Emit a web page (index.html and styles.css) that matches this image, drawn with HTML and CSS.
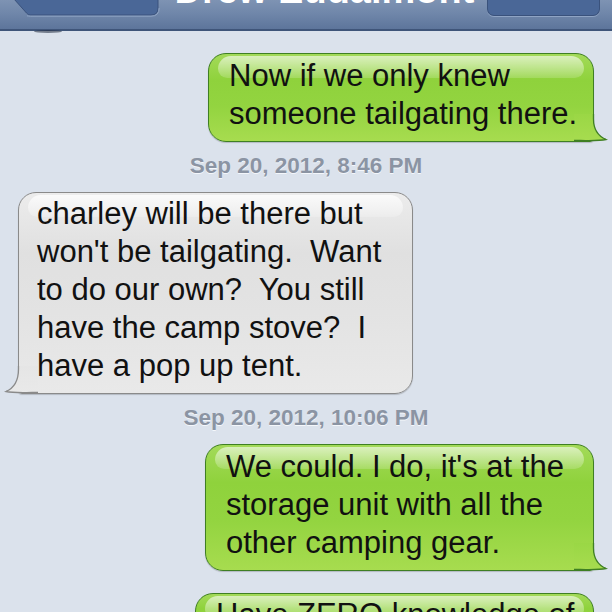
FILE: index.html
```html
<!DOCTYPE html>
<html>
<head>
<meta charset="utf-8">
<link rel="stylesheet" href="styles.css">
</head>
<body>
<svg class="defs" width="0" height="0">
  <defs>
    <linearGradient id="gTail" x1="0" y1="0" x2="0" y2="1">
      <stop offset="0" stop-color="#9ad745"/>
      <stop offset="1" stop-color="#a7dc4f"/>
    </linearGradient>
    <linearGradient id="wTail" x1="0" y1="0" x2="0" y2="1">
      <stop offset="0" stop-color="#e5e5e5"/>
      <stop offset="1" stop-color="#e9e9e9"/>
    </linearGradient>
  </defs>
</svg>
<header class="nav">
  <svg class="back" width="150" height="17" viewBox="0 0 150 17">
    <path d="M2 -1 L14.5 13 Q16 15 18.5 15 L139 15 Q146 15 146 8 L146 -1 Z" fill="#4a6797" stroke="#3a527c" stroke-width="1"/>
    <path d="M15 15.8 Q16.5 16.2 18.5 16.2 L139 16.2 Q147.2 16.2 147.2 8" fill="none" stroke="#8fa4c4" stroke-width="1"/>
  </svg>
  <h1 class="title">Drew Eudaimont</h1>
  <div class="btn-right"></div>
</header>
<div class="shadow-blob"></div>
<main class="thread">
  <div class="bubble out b1">
    <span class="txt">Now if we only knew<br>someone tailgating there.</span>
    <svg class="tail tail-out" width="34" height="28" viewBox="0 0 34 28"><path d="M0 0 H19.5 V5 C19.5 16 24 22 32 25.5 C25 27 15 26.5 6 26.5 H0 Z" fill="url(#gTail)"/><path d="M19.5 0 V5 C19.5 16 24 22 32 25.5 C25 27 15 26.5 6 26.5 H0" fill="none" stroke="#3f7f23" stroke-width="1.3"/></svg>
  </div>
  <p class="stamp">Sep 20, 2012, 8:46 PM</p>
  <div class="bubble in b2">
    <span class="txt">charley will be there but<br>won't be tailgating.&nbsp; Want<br>to do our own?&nbsp; You still<br>have the camp stove?&nbsp; I<br>have a pop up tent.</span>
    <svg class="tail tail-in" width="34" height="28" viewBox="0 0 34 28"><path d="M0 0 H19.5 V3 C19.5 15 24 22 32 25.5 C25 27 15 26.5 6 26.5 H0 Z" fill="url(#wTail)"/><path d="M19.5 0 V3 C19.5 15 24 22 32 25.5 C25 27 15 26.5 6 26.5 H0" fill="none" stroke="#8a8a8a" stroke-width="1.3"/></svg>
  </div>
  <p class="stamp">Sep 20, 2012, 10:06 PM</p>
  <div class="bubble out b3">
    <span class="txt">We could. I do, it's at the<br>storage unit with all the<br>other camping gear.</span>
    <svg class="tail tail-out" width="34" height="28" viewBox="0 0 34 28"><path d="M0 0 H19.5 V5 C19.5 16 24 22 32 25.5 C25 27 15 26.5 6 26.5 H0 Z" fill="url(#gTail)"/><path d="M19.5 0 V5 C19.5 16 24 22 32 25.5 C25 27 15 26.5 6 26.5 H0" fill="none" stroke="#3f7f23" stroke-width="1.3"/></svg>
  </div>
  <div class="bubble out b4">
    <span class="txt">Have ZERO knowledge of</span>
  </div>
</main>
</body>
</html>
```
FILE: styles.css
```css
html, body {
  margin: 0;
  padding: 0;
}
body {
  background: #dbe2ec;
  font-family: "Liberation Sans", Arial, Helvetica, sans-serif;
  height: 612px;
  overflow: hidden;
  position: relative;
}
.defs {
  position: absolute;
  width: 0;
  height: 0;
}
.nav {
  height: 29px;
  display: flex;
  align-items: flex-start;
  overflow: hidden;
  background: linear-gradient(#7e93b3 0%, #7087aa 45%, #5d759b 100%);
  border-bottom: 2px solid #3f5579;
  padding: 0 12px 0 12px;
}
.back {
  display: block;
  flex: none;
}
.title {
  flex: 1;
  margin: -29px 0 0 0;
  font-size: 38px;
  line-height: 38px;
  font-weight: bold;
  color: #fff;
  text-align: center;
  text-shadow: 0 -1px 0 #3b5076;
  white-space: nowrap;
}
.btn-right {
  flex: none;
  width: 111px;
  height: 15px;
  background: #4a6797;
  border: 1px solid #3a527c;
  border-top: none;
  border-radius: 0 0 7px 7px;
  box-shadow: 0 1px 0 #8fa4c4;
}
.shadow-blob {
  position: absolute;
  left: 34px;
  top: 30px;
  width: 28px;
  height: 3px;
  border-radius: 50%;
  background: rgba(30, 40, 60, 0.55);
  filter: blur(0.6px);
}
.thread {
  display: flex;
  flex-direction: column;
  padding: 22px 18px 0 18px;
}
.bubble {
  position: relative;
  box-sizing: border-box;
  font-size: 31px;
  line-height: 38px;
  color: #111;
  white-space: nowrap;
  padding: 2.5px 0 8px 0;
  border-radius: 18px;
  box-shadow: 0 1px 1px rgba(0, 0, 0, 0.18);
}
.bubble::before {
  content: "";
  position: absolute;
  top: 2px;
  left: 9px;
  right: 9px;
  height: 22px;
  border-radius: 14px 14px 10px 10px;
  background: linear-gradient(rgba(255, 255, 255, 0.6), rgba(255, 255, 255, 0.16));
}
.txt {
  position: relative;
  z-index: 1;
  display: block;
}
.out {
  align-self: flex-end;
  background: linear-gradient(#a3da59 0%, #8fd23c 30%, #93d440 60%, #a7dc4f 100%);
  border: 1px solid #3f7f23;
  border-bottom-right-radius: 4px;
  padding-left: 20px;
}
.in {
  align-self: flex-start;
  background: linear-gradient(#ececec 0%, #e0e0e0 30%, #e3e3e3 60%, #e9e9e9 100%);
  border: 1px solid #8a8a8a;
  border-bottom-left-radius: 4px;
  padding-left: 18px;
}
.in::before {
  background: linear-gradient(rgba(255, 255, 255, 0.75), rgba(255, 255, 255, 0.2));
}
.tail {
  position: absolute;
  bottom: -1px;
  z-index: 0;
}
.tail-out {
  right: -15px;
}
.tail-in {
  left: -15px;
  transform: scaleX(-1);
}
.b1 { width: 386px; }
.b2 { width: 395px; }
.b3 { width: 389px; }
.b4 { width: 399px; margin-top: 22px; }
.stamp {
  margin: 11px 0 13px 0;
  text-align: center;
  font-size: 22.5px;
  line-height: 26px;
  font-weight: bold;
  color: #8b94a3;
  text-shadow: 0 1px 0 #f4f7fb;
}
```
